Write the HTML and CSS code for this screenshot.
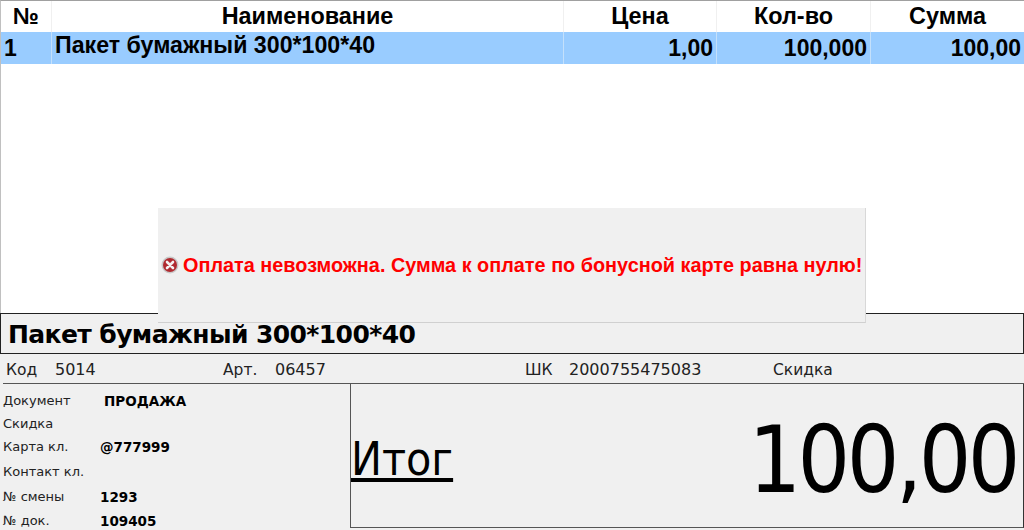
FILE: index.html
```html
<!DOCTYPE html>
<html lang="ru">
  <head>
    <meta charset="UTF-8" />
    <title>Касса</title>
    <link rel="stylesheet" href="styles.css">
  </head>
  <body>
    <div class="sale-table">
      <div class="row head-row">
        <div class="cell c-num center">№</div>
        <div class="cell c-name center">Наименование</div>
        <div class="cell c-price center">Цена</div>
        <div class="cell c-qty center">Кол-во</div>
        <div class="cell c-sum center">Сумма</div>
      </div>
      <div class="row sel-row">
        <div class="cell c-num">1</div>
        <div class="cell c-name name-val">Пакет бумажный 300*100*40</div>
        <div class="cell c-price right">1,00</div>
        <div class="cell c-qty right">100,000</div>
        <div class="cell c-sum right">100,00</div>
      </div>
    </div>

    <div class="item-title">Пакет бумажный 300*100*40</div>

    <div class="item-info">
      <div class="info-code"><span class="info-key key-code">Код</span>5014</div>
      <div class="info-art"><span class="info-key key-art">Арт.</span>06457</div>
      <div class="info-bar"><span class="info-key key-bar">ШК</span>2000755475083</div>
      <div class="info-key">Скидка</div>
    </div>

    <div class="bottom">
      <div class="doc-info">
        <div class="doc-row tight"><span class="doc-key">Документ</span><b class="doc-type">ПРОДАЖА</b></div>
        <div class="doc-row tight"><span class="doc-key">Скидка</span></div>
        <div class="doc-row wide"><span class="doc-key">Карта кл.</span><b>@777999</b></div>
        <div class="doc-row wide"><span class="doc-key">Контакт кл.</span></div>
        <div class="doc-row"><span class="doc-key">№ смены</span><b>1293</b></div>
        <div class="doc-row"><span class="doc-key">№ док.</span><b>109405</b></div>
      </div>
      <div class="total">
        <span class="total-label">Итог</span>
        <span class="total-value">100,00</span>
      </div>
    </div>

    <!-- Error message over the table -->
    <div class="message">
      <svg class="err-icon" width="18" height="18" viewBox="0 0 18 18">
        <circle cx="9" cy="9" r="8.5" fill="#c9c9c9" />
        <circle cx="9" cy="9" r="7" fill="#b02a30" />
        <path d="M6 6l6 6M12 6l-6 6" stroke="#f4f0f0" stroke-width="2.6" stroke-linecap="round" />
      </svg>
      <span>Оплата невозможна. Сумма к оплате по бонусной карте равна нулю!</span>
    </div>
  </body>
</html>
```

FILE: styles.css
```css
html,
body {
  margin: 0;
  padding: 0;
}
body {
  position: relative;
  width: 1024px;
  height: 530px;
  overflow: hidden;
  background: #f0f0f0;
  color: #000;
  font-family: "DejaVu Sans", sans-serif;
}

.sale-table {
  height: 313px;
  box-sizing: border-box;
  background: #fff;
  border-top: 1px solid #a0a0a0;
  border-left: 1px solid #c0c0c0;
  font-family: "Liberation Sans", Arial, sans-serif;
  font-weight: bold;
  font-size: 23px;
}
.row {
  display: flex;
}
.head-row {
  height: 31px;
  line-height: 30px;
  font-size: 23.4px;
}
.sel-row {
  height: 32px;
  background: #99ccff;
}
.cell {
  box-sizing: border-box;
  border-right: 1px solid #f0f0f0;
  padding: 0 3px;
  white-space: nowrap;
}
.sel-row .cell {
  line-height: 33px;
  border-right-color: #c4e0fb;
}
.sel-row .name-val {
  line-height: 27px;
  font-size: 23.2px;
}
.c-num {
  width: 51px;
}
.c-name {
  width: 512px;
}
.c-price {
  width: 153px;
}
.c-qty {
  width: 154px;
}
.c-sum {
  width: 153px;
  border-right: none;
}
.center {
  text-align: center;
}
.right {
  text-align: right;
}

.item-title {
  height: 41px;
  box-sizing: border-box;
  border: 1px solid #222;
  padding-left: 7px;
  font-family: "DejaVu Sans", sans-serif;
  font-weight: bold;
  font-size: 25px;
  letter-spacing: -0.6px;
  line-height: 42px;
  white-space: nowrap;
}

.item-info {
  display: flex;
  height: 29px;
  box-sizing: border-box;
  padding-left: 6px;
  font-size: 16px;
  line-height: 32px;
  color: #222;
}
.info-key {
  display: inline-block;
  font-size: 15.5px;
}
.key-code {
  width: 49px;
}
.key-art {
  width: 52px;
}
.key-bar {
  width: 44px;
}
.info-code {
  width: 217px;
}
.info-art {
  width: 302px;
}
.info-bar {
  width: 248px;
}

.bottom {
  display: flex;
  height: 146px;
  box-sizing: border-box;
  margin-left: 3px;
  border-top: 1px solid #555;
}
.doc-info {
  width: 347px;
  padding-top: 5px;
  font-size: 13px;
}
.doc-row {
  display: flex;
  height: 24px;
  line-height: 24px;
  white-space: nowrap;
}
.doc-row.tight {
  height: 23px;
}
.doc-row.wide {
  height: 25px;
}
.doc-row b {
  font-size: 13.5px;
}
.doc-key {
  width: 97px;
  color: #222;
}
.doc-type {
  margin-left: 4px;
}
.total {
  flex: 1;
  display: flex;
  justify-content: space-between;
  align-items: center;
  height: 144px;
  box-sizing: border-box;
  border-left: 1px solid #555;
  border-right: 1px solid #333;
  border-bottom: 1px solid #555;
  font-family: "DejaVu Sans Condensed", "DejaVu Sans", sans-serif;
}
.total-label {
  margin-top: 6px;
  font-size: 46px;
  text-decoration: underline;
}
.total-value {
  margin-top: 10px;
  margin-right: 6px;
  font-size: 92px;
  letter-spacing: -3.5px;
}

.message {
  position: absolute;
  left: 158px;
  top: 208px;
  width: 708px;
  height: 115px;
  box-sizing: border-box;
  display: flex;
  align-items: center;
  gap: 4px;
  padding-left: 3px;
  background: #f0f0f0;
  border-right: 1px solid #d8d8d8;
  border-bottom: 1px solid #d0d0d0;
  color: #ff0000;
  font-family: "Liberation Sans", Arial, sans-serif;
  font-weight: bold;
  font-size: 19.85px;
  white-space: nowrap;
}
.err-icon {
  flex-shrink: 0;
}
```
